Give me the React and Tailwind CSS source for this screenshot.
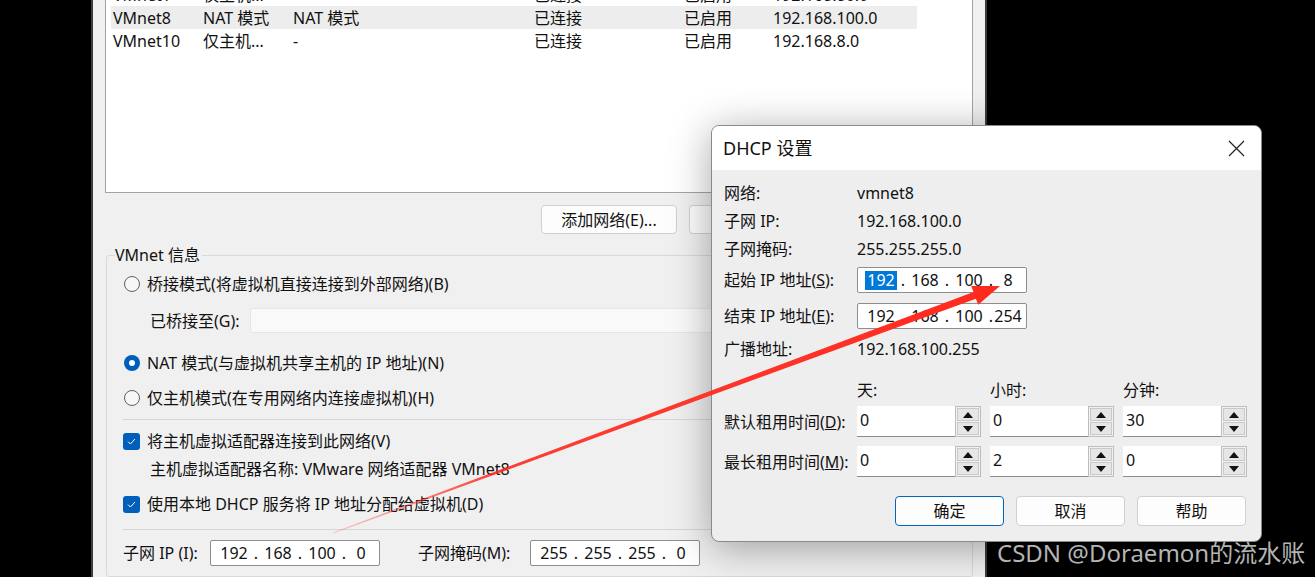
import { Fragment } from 'react'

const rows = [
  ['VMnet1', '仅主机...', '-', '已连接', '已启用', '192.168.80.0', false],
  ['VMnet8', 'NAT 模式', 'NAT 模式', '已连接', '已启用', '192.168.100.0', true],
  ['VMnet10', '仅主机...', '-', '已连接', '已启用', '192.168.8.0', false],
]

function Radio({ on, children }) {
  return (
    <div className="flex h-[28px] items-center pl-[17px]">
      {on ? (
        <span className="flex h-[16px] w-[16px] items-center justify-center rounded-full bg-[#005fb8]">
          <span className="h-[6px] w-[6px] rounded-full bg-white" />
        </span>
      ) : (
        <span className="h-[16px] w-[16px] rounded-full border border-[#616161] bg-[#f7f7f7]" />
      )}
      <span className="ml-[7px]">{children}</span>
    </div>
  )
}

function Check({ children, className = '' }) {
  return (
    <div className={`flex h-[28px] items-center pl-[16px] ${className}`}>
      <span className="flex h-[17px] w-[17px] items-center justify-center rounded-[3px] bg-[#005fb8]">
        <svg width="9" height="7" viewBox="0 0 9 7" fill="none">
          <path d="M1 3.6 3.4 6 8 1" stroke="white" strokeWidth="1" />
        </svg>
      </span>
      <span className="ml-[7px]">{children}</span>
    </div>
  )
}

function IpBox({ parts, select, className = '' }) {
  return (
    <div className={`flex h-[26px] w-[170px] items-center rounded-[2px] border border-[#8e8e8e] bg-white pl-[6px] ${className}`}>
      {parts.map((p, i) => (
        <Fragment key={i}>
          {i > 0 && <span className="w-[10px] text-center">.</span>}
          <span className={`flex justify-center ${i === 3 ? 'w-[24px]' : 'w-[34px]'}`}>
            {select && i === 0 ? (
              <span className="flex h-[19px] w-[32px] items-center justify-center bg-[#0078d7] text-white">{p}</span>
            ) : (
              p
            )}
          </span>
        </Fragment>
      ))}
    </div>
  )
}

function Tri({ down }) {
  return (
    <svg width="10" height="6" viewBox="0 0 10 6">
      <path d={down ? 'M0 0h10L5 6z' : 'M0 6h10L5 0z'} fill="#111" />
    </svg>
  )
}

function Spin({ value }) {
  return (
    <div className="flex h-[31px] w-[124px]">
      <div className="flex flex-1 items-center border-b border-[#8c8c8c] bg-white pb-[3px] pl-[3px]">{value}</div>
      <div className="flex w-[26px] flex-col gap-px border border-[#bdbdbd] bg-[#f2f2f2] p-px">
        <div className="flex flex-1 items-center justify-center border border-[#c9c9c9] bg-[#e6e6e6]">
          <Tri />
        </div>
        <div className="flex flex-1 items-center justify-center border border-[#c9c9c9] bg-[#e6e6e6]">
          <Tri down />
        </div>
      </div>
    </div>
  )
}

function Btn({ children, primary }) {
  return (
    <div
      className={`flex h-[30px] w-[109px] items-center justify-center rounded-[4px] bg-[#fdfdfd] ${
        primary ? 'border border-[#0067c0]' : 'border border-[#d0d0d0]'
      }`}
    >
      {children}
    </div>
  )
}

function Info({ label, children }) {
  return (
    <div className="flex h-[28px] items-center">
      <span className="w-[133px] shrink-0">{label}</span>
      <span>{children}</span>
    </div>
  )
}

export default function App() {
  return (
    <div className="relative h-[577px] w-[1315px] overflow-hidden bg-black font-['Noto_Sans','Noto_Sans_CJK_SC',sans-serif] text-[16px] leading-[20px] text-[#111]">
      {/* Virtual network editor window */}
      <div className="ml-[91px] flex h-full w-[896px] flex-col border-x-2 border-[#3c3c3c] bg-[#f0f0f0]">
        <div className="ml-[12px] -mt-[21px] h-[214px] w-[868px] shrink-0 border border-[#a3a3a3] bg-white pt-[3px]">
          {rows.map(r => (
            <div key={r[0]} className={`ml-[5px] flex h-[23px] w-[806px] items-center pl-[2px] ${r[6] ? 'bg-[#ededed]' : ''}`}>
              <span className="w-[90px]">{r[0]}</span>
              <span className="w-[90px]">{r[1]}</span>
              <span className="w-[241px]">{r[2]}</span>
              <span className="w-[150px]">{r[3]}</span>
              <span className="w-[89px]">{r[4]}</span>
              <span>{r[5]}</span>
            </div>
          ))}
        </div>

        <div className="mt-[12px] flex w-[880px] shrink-0 justify-end gap-[12px]">
          {['添加网络(E)...', '移除网络(O)', '重命名网络(W)...'].map(t => (
            <div key={t} className="flex h-[29px] w-[136px] items-center justify-center rounded-[4px] border border-[#d0d0d0] bg-[#fdfdfd]">
              {t}
            </div>
          ))}
        </div>

        <fieldset className="ml-[13px] mt-[11px] w-[867px] grow rounded-[3px] border border-[#d9d9d9] pt-[5px]">
          <legend className="ml-[8px] pr-[2px]">VMnet 信息</legend>
          <Radio>桥接模式(将虚拟机直接连接到外部网络)(B)</Radio>
          <div className="mt-[10px] flex h-[25px] items-center pl-[43px]">
            <span className="w-[100px]">已桥接至(G):</span>
            <div className="h-[25px] w-[690px] rounded-[3px] border border-[#e6e6e6] bg-[#f9f9f9]" />
          </div>
          <div className="mt-[16px]">
            <Radio on>NAT 模式(与虚拟机共享主机的 IP 地址)(N)</Radio>
          </div>
          <div className="mt-[7px]">
            <Radio>仅主机模式(在专用网络内连接虚拟机)(H)</Radio>
          </div>
          <div className="ml-[16px] mr-[14px] mt-[7px] h-px bg-[#d6d6d6]" />
          <Check className="mt-[7px]">将主机虚拟适配器连接到此网络(V)</Check>
          <div className="mt-[3px] flex h-[22px] items-center pl-[43px]">主机虚拟适配器名称: VMware 网络适配器 VMnet8</div>
          <Check className="mt-[10px]">使用本地 DHCP 服务将 IP 地址分配给虚拟机(D)</Check>
          <div className="ml-[16px] mr-[14px] mt-[11px] h-px bg-[#d6d6d6]" />
          <div className="mt-[10px] flex items-center pl-[16px]">
            <span className="w-[87px]">子网 IP (I):</span>
            <IpBox parts={['192', '168', '100', '0']} />
            <span className="ml-[38px] w-[112px]">子网掩码(M):</span>
            <IpBox parts={['255', '255', '255', '0']} />
          </div>
        </fieldset>
      </div>

      {/* DHCP dialog */}
      <div className="absolute left-[711px] top-[125px] flex h-[417px] w-[551px] flex-col overflow-hidden rounded-[8px] border border-[#8a8a8a] bg-[#eeeeee] shadow-[0_6px_40px_rgba(0,0,0,0.35)]">
        <div className="flex h-[44px] shrink-0 items-center justify-between bg-white pl-[11px] pr-[16px]">
          <span className="text-[18px]">DHCP 设置</span>
          <svg width="17" height="17" viewBox="0 0 17 17" fill="none">
            <path d="M1 1 16 16M16 1 1 16" stroke="#222" strokeWidth="1.2" />
          </svg>
        </div>
        <div className="flex flex-col pl-[12px] pt-[9px]">
          <Info label="网络:">vmnet8</Info>
          <Info label="子网 IP:">192.168.100.0</Info>
          <Info label="子网掩码:">255.255.255.0</Info>
          <div className="mt-[4px] flex items-center">
            <span className="w-[133px] shrink-0">
              起始 IP 地址(<span className="underline">S</span>):
            </span>
            <IpBox parts={['192', '168', '100', '8']} select />
          </div>
          <div className="mt-[10px] flex items-center">
            <span className="w-[133px] shrink-0">
              结束 IP 地址(<span className="underline">E</span>):
            </span>
            <IpBox parts={['192', '168', '100', '254']} />
          </div>
          <div className="mt-[6px]">
            <Info label="广播地址:">192.168.100.255</Info>
          </div>
          <div className="mt-[17px] flex h-[20px] items-center pl-[133px]">
            <span className="w-[133px]">天:</span>
            <span className="w-[133px]">小时:</span>
            <span>分钟:</span>
          </div>
          <div className="mt-[6px] flex items-center gap-[9px]">
            <span className="w-[124px] shrink-0 whitespace-nowrap">
              默认租用时间(<span className="underline">D</span>):
            </span>
            <Spin value="0" />
            <Spin value="0" />
            <Spin value="30" />
          </div>
          <div className="mt-[9px] flex items-center gap-[9px]">
            <span className="w-[124px] shrink-0 whitespace-nowrap">
              最长租用时间(<span className="underline">M</span>):
            </span>
            <Spin value="0" />
            <Spin value="2" />
            <Spin value="0" />
          </div>
          <div className="mt-[19px] flex gap-[12px] pl-[171px]">
            <Btn primary>确定</Btn>
            <Btn>取消</Btn>
            <Btn>帮助</Btn>
          </div>
        </div>
      </div>

      {/* red annotation arrow */}
      <svg className="pointer-events-none absolute left-0 top-0" width="1315" height="577" viewBox="0 0 1315 577">
        <defs>
          <linearGradient id="fade" x1="333" y1="533" x2="1000" y2="286" gradientUnits="userSpaceOnUse">
            <stop offset="0" stopColor="#ff2a1e" stopOpacity="0.2" />
            <stop offset="0.25" stopColor="#ff2a1e" stopOpacity="0.9" />
            <stop offset="1" stopColor="#ff2a1e" />
          </linearGradient>
        </defs>
        <polygon
          points="332.8,532.5 973.5,292.1 971.2,286.0 1000,286 978.2,304.8 975.9,298.7 333.2,533.5"
          fill="url(#fade)"
        />
      </svg>

      <div className="absolute left-[997px] top-[537px] text-[24px] leading-[32px] text-[#b4b4b4]">CSDN @Doraemon的流水账</div>
    </div>
  )
}
